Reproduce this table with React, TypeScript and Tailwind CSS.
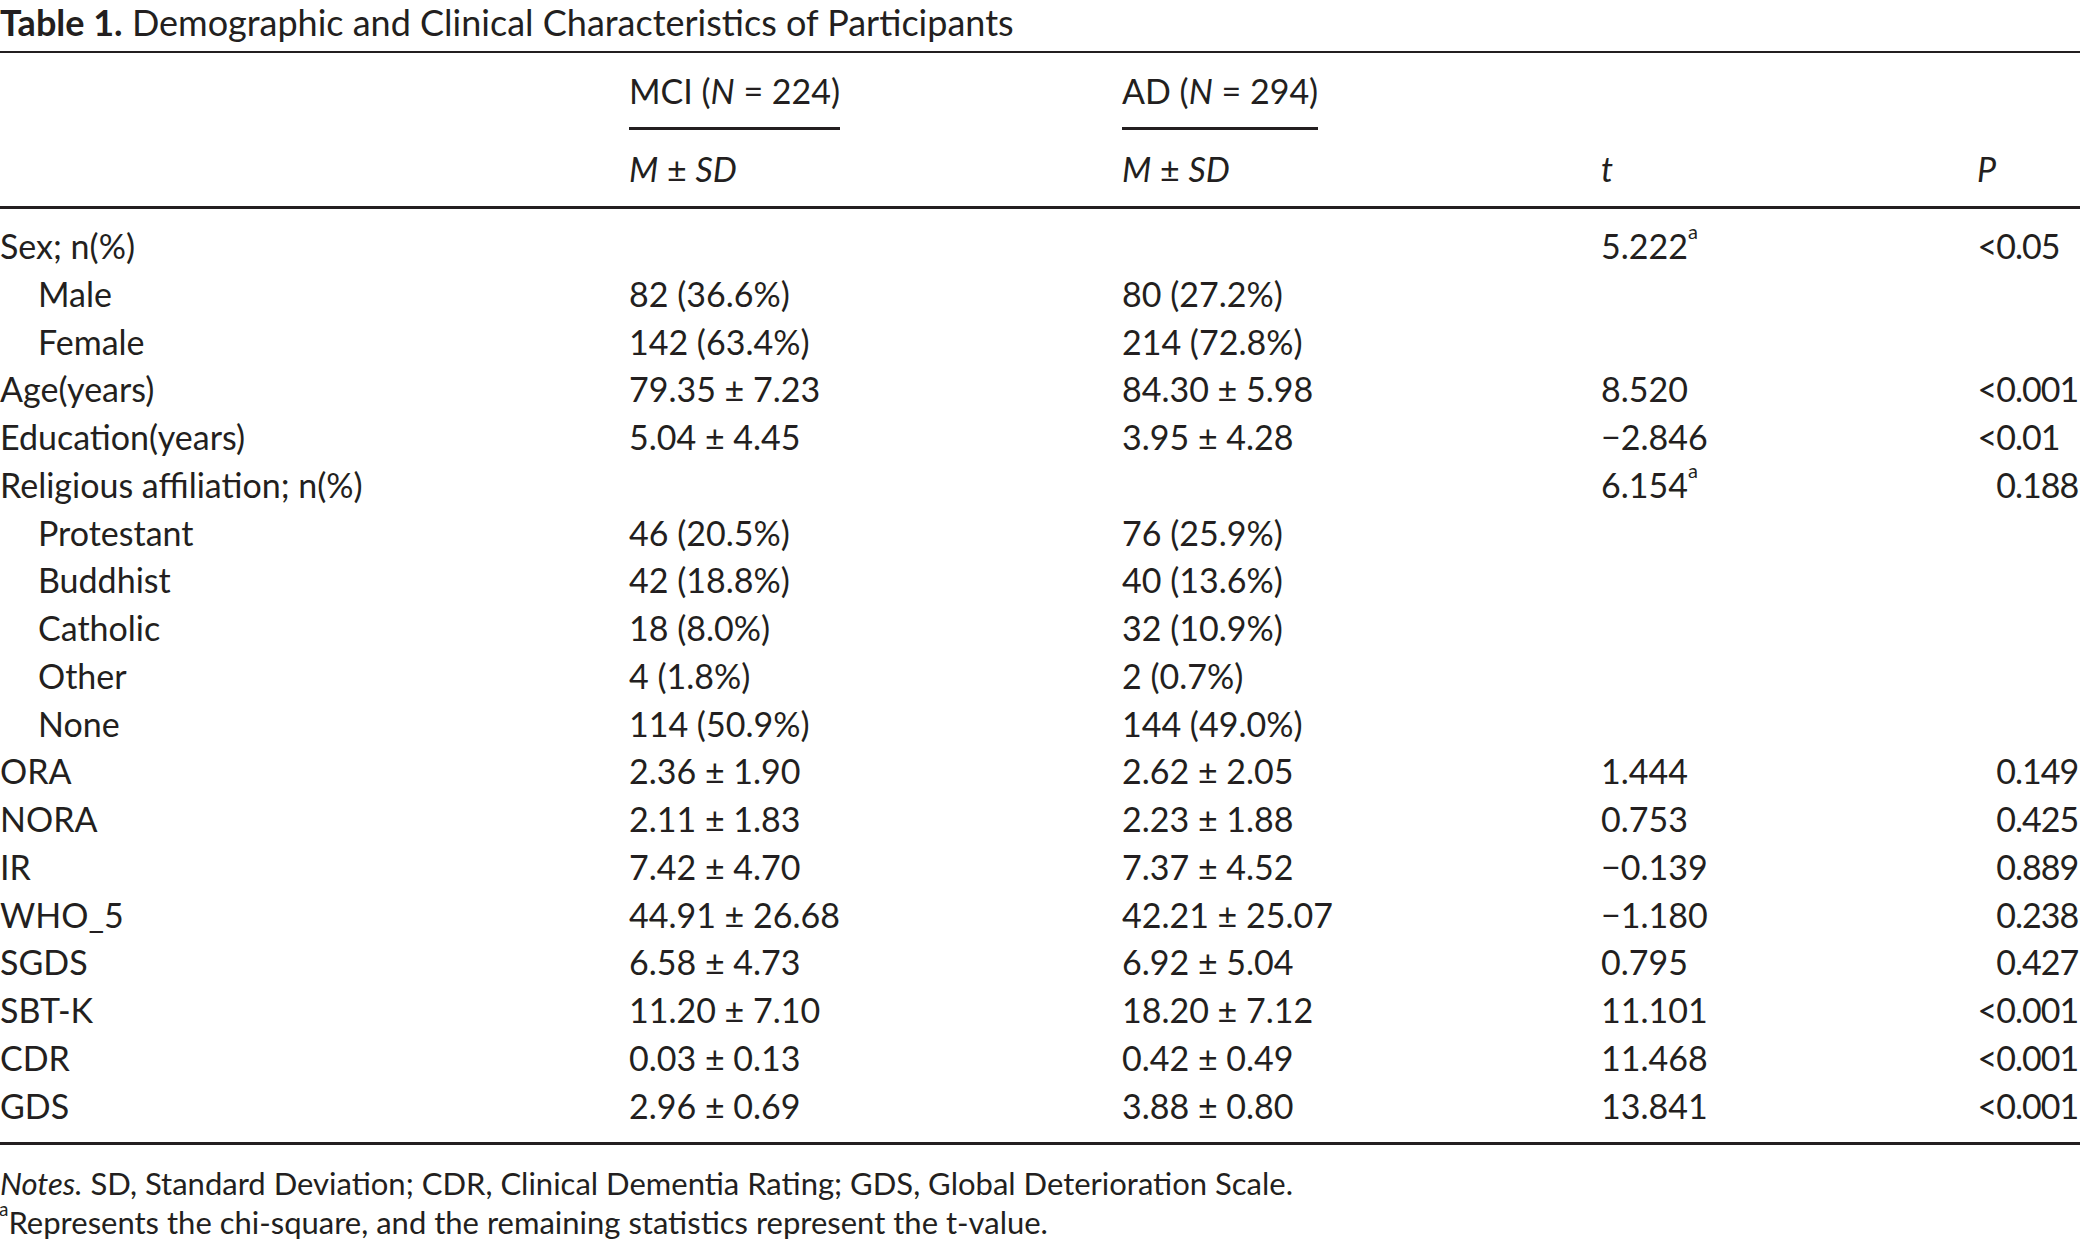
type Row = {
  label: string;
  indent?: boolean;
  mci?: string;
  ad?: string;
  t?: string;
  sup?: boolean;
  p?: string;
};

const rows: Row[] = [
  { label: "Sex; n(%)", t: "5.222", sup: true, p: "<0.05" },
  { label: "Male", indent: true, mci: "82 (36.6%)", ad: "80 (27.2%)" },
  { label: "Female", indent: true, mci: "142 (63.4%)", ad: "214 (72.8%)" },
  { label: "Age(years)", mci: "79.35 ± 7.23", ad: "84.30 ± 5.98", t: "8.520", p: "<0.001" },
  { label: "Education(years)", mci: "5.04 ± 4.45", ad: "3.95 ± 4.28", t: "\u22122.846", p: "<0.01" },
  { label: "Religious affiliation; n(%)", t: "6.154", sup: true, p: "0.188" },
  { label: "Protestant", indent: true, mci: "46 (20.5%)", ad: "76 (25.9%)" },
  { label: "Buddhist", indent: true, mci: "42 (18.8%)", ad: "40 (13.6%)" },
  { label: "Catholic", indent: true, mci: "18 (8.0%)", ad: "32 (10.9%)" },
  { label: "Other", indent: true, mci: "4 (1.8%)", ad: "2 (0.7%)" },
  { label: "None", indent: true, mci: "114 (50.9%)", ad: "144 (49.0%)" },
  { label: "ORA", mci: "2.36 ± 1.90", ad: "2.62 ± 2.05", t: "1.444", p: "0.149" },
  { label: "NORA", mci: "2.11 ± 1.83", ad: "2.23 ± 1.88", t: "0.753", p: "0.425" },
  { label: "IR", mci: "7.42 ± 4.70", ad: "7.37 ± 4.52", t: "\u22120.139", p: "0.889" },
  { label: "WHO_5", mci: "44.91 ± 26.68", ad: "42.21 ± 25.07", t: "\u22121.180", p: "0.238" },
  { label: "SGDS", mci: "6.58 ± 4.73", ad: "6.92 ± 5.04", t: "0.795", p: "0.427" },
  { label: "SBT-K", mci: "11.20 ± 7.10", ad: "18.20 ± 7.12", t: "11.101", p: "<0.001" },
  { label: "CDR", mci: "0.03 ± 0.13", ad: "0.42 ± 0.49", t: "11.468", p: "<0.001" },
  { label: "GDS", mci: "2.96 ± 0.69", ad: "3.88 ± 0.80", t: "13.841", p: "<0.001" },
];

// decimal-aligned P column
const PValue = ({ v }: { v?: string }) => {
  if (!v) return null;
  const [int, frac] = v.split(".");
  return (
    <span className="whitespace-nowrap tracking-[-1px]">
      <span className="inline-block w-[38px] text-right">{int}</span>.{frac}
    </span>
  );
};

const cols = "grid grid-cols-[629px_493px_479px_376px_1fr]";

export default function App() {
  return (
    <div
      className="w-[2080px] h-[1241px] overflow-hidden bg-white text-[#231f20] text-[34px]"
      style={{ fontFamily: "Lato, 'Open Sans', sans-serif" }}
    >
      <div className="text-[36px] leading-[44px] whitespace-nowrap">
        <span className="font-bold">Table 1.</span> Demographic and Clinical Characteristics of Participants
      </div>

      <div className="mt-[7px] border-t-2 border-[#231f20]" />

      {/* header */}
      <div className={`${cols} pt-[14px] leading-[48px]`}>
        <div />
        <div>
          <span className="inline-block border-b-[3px] border-[#231f20] pb-[12px]">
            MCI (<i>N</i> = 224)
          </span>
        </div>
        <div>
          <span className="inline-block border-b-[3px] border-[#231f20] pb-[12px]">
            AD (<i>N</i> = 294)
          </span>
        </div>
        <div />
        <div />
      </div>
      <div className={`${cols} pt-[15px] pb-[13px] leading-[48px]`}>
        <div />
        <div><i>M</i> ± <i>SD</i></div>
        <div><i>M</i> ± <i>SD</i></div>
        <div><i>t</i></div>
        <div><i>P</i></div>
      </div>

      <div className="border-t-[3px] border-[#231f20]" />

      {/* body */}
      <div className="pt-[13px] pb-[13px]">
        {rows.map((r) => (
          <div key={r.label} className={`${cols} h-[47.75px] leading-[47.75px] whitespace-nowrap`}>
            <div className={r.indent ? "pl-[38px]" : ""}>{r.label}</div>
            <div>{r.mci}</div>
            <div>{r.ad}</div>
            <div>
              {r.t}
              {r.sup && <sup className="text-[20px] align-[10px]">a</sup>}
            </div>
            <div>
              <PValue v={r.p} />
            </div>
          </div>
        ))}
      </div>

      <div className="border-t-[3px] border-[#231f20]" />

      <div className="pt-[19px] text-[31px] leading-[39px] whitespace-nowrap">
        <div>
          <i>Notes.</i> SD, Standard Deviation; CDR, Clinical Dementia Rating; GDS, Global Deterioration Scale.
        </div>
        <div className="-ml-[1px]">
          <sup className="text-[19px] align-[9px]">a</sup>Represents the chi-square, and the remaining statistics represent the t-value.
        </div>
      </div>
    </div>
  );
}
